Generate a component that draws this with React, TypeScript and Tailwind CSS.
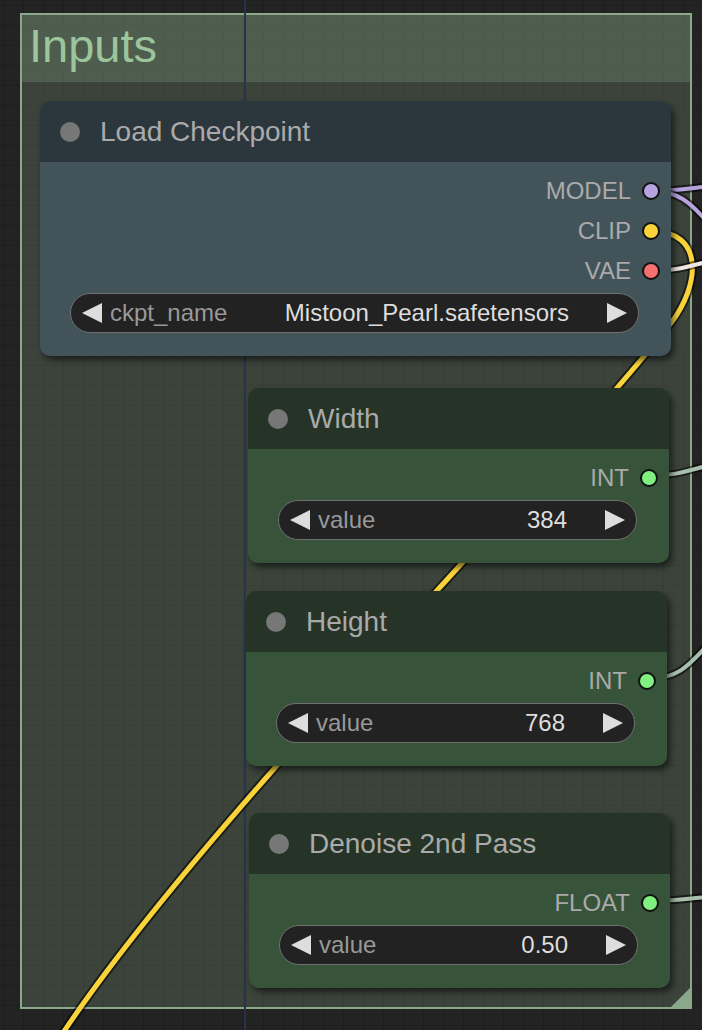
import React from "react";

type Output = { label: string; dot: string };

type Widget = { name: string; value: string };

interface GraphNodeProps {
  pos: string;
  title: string;
  titleBg: string;
  bodyBg: string;
  outputs: Output[];
  widget: Widget;
}

const Arrow = ({ dir }: { dir: "left" | "right" }) => (
  <svg width="20" height="20" viewBox="0 0 20 20" className="shrink-0">
    <polygon
      points={dir === "left" ? "20,0 20,20 0,10" : "0,0 20,10 0,20"}
      fill="#dddddd"
    />
  </svg>
);

const ComboWidget = ({ name, value }: Widget) => (
  <div className="mt-[2px] ml-[30px] mr-[32px] h-10 rounded-full bg-[#222] border border-[#707070] flex items-center px-[11px] text-[24px] leading-none">
    <Arrow dir="left" />
    <span className="ml-[8px] text-[#999]">{name}</span>
    <span className="ml-auto text-[#ddd]">{value}</span>
    <span className="ml-[38px]">
      <Arrow dir="right" />
    </span>
  </div>
);

const GraphNode: React.FC<GraphNodeProps> = ({
  pos,
  title,
  titleBg,
  bodyBg,
  outputs,
  widget,
}) => {
  return (
    <div
      className={`absolute ${pos} rounded-[10px] shadow-[3px_4px_6px_rgba(0,0,0,0.55)] ${bodyBg}`}
    >
      <div
        className={`h-[61px] flex items-center pl-5 gap-5 rounded-t-[10px] ${titleBg}`}
      >
        <span className="w-5 h-5 rounded-full bg-[#777]" />
        <span className="text-[28px] leading-none text-[#aaa]">{title}</span>
      </div>
      <div className="pt-[9px] pb-[23px]">
        {outputs.map((o) => (
          <div
            key={o.label}
            className="h-10 flex items-center justify-end pr-[11px] gap-[11px]"
          >
            <span className="text-[24px] leading-none text-[#aaa]">
              {o.label}
            </span>
            <span
              className={`w-[18px] h-[18px] rounded-full border-2 border-[#111] ${o.dot}`}
            />
          </div>
        ))}
        <ComboWidget {...widget} />
      </div>
    </div>
  );
};

// links are drawn twice: dark casing first, then the coloured core
const Link = ({
  d,
  color,
  width = 4,
}: {
  d: string;
  color: string;
  width?: number;
}) => (
  <>
    <path d={d} fill="none" stroke="rgba(0,0,0,0.55)" strokeWidth={width + 4} />
    <path d={d} fill="none" stroke={color} strokeWidth={width} />
  </>
);

export default function App() {
  return (
    <div className="relative w-[702px] h-[1030px] overflow-hidden bg-[#232323] font-['Liberation_Sans',Arial,sans-serif]">
      {/* canvas grid */}
      <svg className="absolute inset-0" width="702" height="1030">
        <defs>
          <pattern
            id="grid"
            width="20"
            height="20"
            patternUnits="userSpaceOnUse"
            x="3"
            y="5"
          >
            <path
              d="M20 0 L0 0 0 20"
              fill="none"
              stroke="#1b1b1b"
              strokeWidth="1.5"
            />
          </pattern>
        </defs>
        <rect width="702" height="1030" fill="url(#grid)" />
      </svg>

      {/* group */}
      <div className="absolute left-[20px] top-[13px] w-[672px] h-[996px] border-2 border-[#8aa88a] bg-[rgba(136,170,136,0.24)] flex flex-col">
        <div className="h-[67px] bg-[rgba(136,170,136,0.25)] pl-[7px] pt-[7px]">
          <span className="text-[47px] leading-none text-[#9cc59c]">
            Inputs
          </span>
        </div>
        <svg
          className="absolute right-0 bottom-0"
          width="19"
          height="19"
          viewBox="0 0 19 19"
        >
          <polygon points="19,0 19,19 0,19" fill="#8aa88a" />
        </svg>
      </div>

      {/* links */}
      <svg className="absolute inset-0" width="702" height="1030">
        <line x1="245" y1="0" x2="245" y2="1030" stroke="#27344c" strokeWidth="2" />
        <Link
          d="M651 231 C705 231 700 285 671 323 C642 361 540 477 463 562 C386 647 330 705 273 770 C200 853 110 960 55 1045"
          color="#fad33a"
          width={5}
        />
        <Link d="M651 191 C680 191 690 188 710 186" color="#b6a3df" />
        <Link d="M651 191 C676 191 690 200 712 228" color="#b6a3df" />
        <Link d="M651 271 C676 271 690 266 710 261" color="#eee6e6" />
        <Link d="M648 476 C676 476 690 470 710 465" color="#a9bfad" />
        <Link d="M646 679 C680 679 690 664 712 640" color="#a9bfad" />
        <Link d="M649 901 C676 901 690 898 710 897" color="#a9bfad" />
      </svg>

      <GraphNode
        pos="left-[40px] top-[101px] w-[631px]"
        title="Load Checkpoint"
        titleBg="bg-[#2b373d]"
        bodyBg="bg-[#42545a]"
        outputs={[
          { label: "MODEL", dot: "bg-[#b6a3df]" },
          { label: "CLIP", dot: "bg-[#fad33a]" },
          { label: "VAE", dot: "bg-[#f57070]" },
        ]}
        widget={{ name: "ckpt_name", value: "Mistoon_Pearl.safetensors" }}
      />
      <GraphNode
        pos="left-[248px] top-[388px] w-[421px]"
        title="Width"
        titleBg="bg-[#263427]"
        bodyBg="bg-[#37543a]"
        outputs={[{ label: "INT", dot: "bg-[#80f080]" }]}
        widget={{ name: "value", value: "384" }}
      />
      <GraphNode
        pos="left-[246px] top-[591px] w-[421px]"
        title="Height"
        titleBg="bg-[#263427]"
        bodyBg="bg-[#37543a]"
        outputs={[{ label: "INT", dot: "bg-[#80f080]" }]}
        widget={{ name: "value", value: "768" }}
      />
      <GraphNode
        pos="left-[249px] top-[813px] w-[421px]"
        title="Denoise 2nd Pass"
        titleBg="bg-[#263427]"
        bodyBg="bg-[#37543a]"
        outputs={[{ label: "FLOAT", dot: "bg-[#80f080]" }]}
        widget={{ name: "value", value: "0.50" }}
      />
    </div>
  );
}
